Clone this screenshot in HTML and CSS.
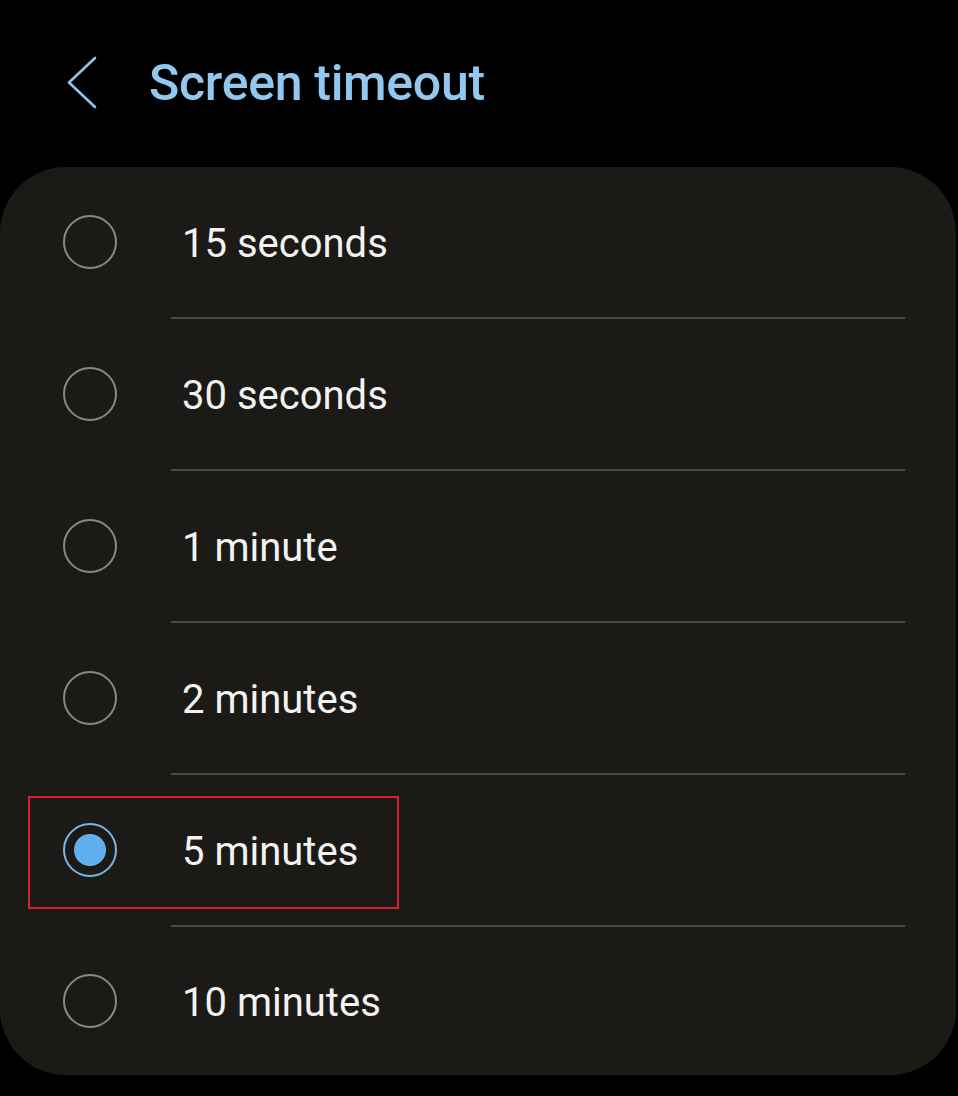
FILE: index.html
```html
<!DOCTYPE html>
<html lang="en">
<head>
  <meta charset="UTF-8" />
  <meta name="viewport" content="width=device-width, initial-scale=1" />
  <title>Screen timeout</title>
  <link rel="stylesheet" href="styles.css">
</head>
<body>
  <header class="top-bar">
    <svg class="back" width="34" height="54" viewBox="0 0 34 54">
      <polyline points="30,3 4,27.5 30,52" fill="none" stroke="#8ec4ec" stroke-width="2.6" stroke-linecap="round" stroke-linejoin="round" />
    </svg>
    <h1 class="title">Screen timeout</h1>
  </header>

  <div class="card">
    <div class="option"><span class="radio"></span><span class="label">15 seconds</span></div>
    <div class="divider"></div>
    <div class="option"><span class="radio"></span><span class="label">30 seconds</span></div>
    <div class="divider"></div>
    <div class="option"><span class="radio"></span><span class="label">1 minute</span></div>
    <div class="divider"></div>
    <div class="option"><span class="radio"></span><span class="label">2 minutes</span></div>
    <div class="divider"></div>
    <div class="option selected">
      <span class="radio"></span><span class="label">5 minutes</span>
      <span class="highlight"></span>
    </div>
    <div class="divider"></div>
    <div class="option last"><span class="radio"></span><span class="label">10 minutes</span></div>
  </div>
</body>
</html>
```

FILE: styles.css
```css
body {
  margin: 0;
  background: #000;
  font-family: Roboto, "Noto Sans", sans-serif;
  width: 958px;
  height: 1096px;
  overflow: hidden;
}

.top-bar {
  display: flex;
  align-items: center;
  height: 164px;
  padding-left: 65px;
  margin-bottom: 3px;
}

.back {
  display: block;
}

.title {
  margin: 0 0 0 50px;
  padding-top: 2px;
  font-size: 50px;
  font-weight: 500;
  line-height: 1;
  color: #92c7ef;
  letter-spacing: -0.3px;
}

.card {
  width: 956px;
  background: #1c1a17;
  border-radius: 66px;
  box-sizing: border-box;
  padding-right: 51px;
}

.option {
  position: relative;
  display: flex;
  align-items: center;
  height: 150px;
  padding-left: 63px;
}

.option.last {
  height: 148px;
}

.radio {
  box-sizing: border-box;
  width: 54px;
  height: 54px;
  border: 2.5px solid #8a8886;
  border-radius: 50%;
  flex-shrink: 0;
}

.option.selected .radio {
  border: 2.5px solid #7ab6e4;
  background: radial-gradient(circle, #62aff0 0 15.5px, transparent 16.5px);
}

.label {
  margin-left: 65px;
  padding-top: 3px;
  font-size: 40px;
  color: #f2f2f2;
  line-height: 1;
}

.divider {
  height: 2px;
  margin-left: 171px;
  background: #4a4745;
}

.highlight {
  position: absolute;
  left: 28px;
  top: 21px;
  width: 371px;
  height: 113px;
  box-sizing: border-box;
  border: 2px solid #d8202e;
}
```
